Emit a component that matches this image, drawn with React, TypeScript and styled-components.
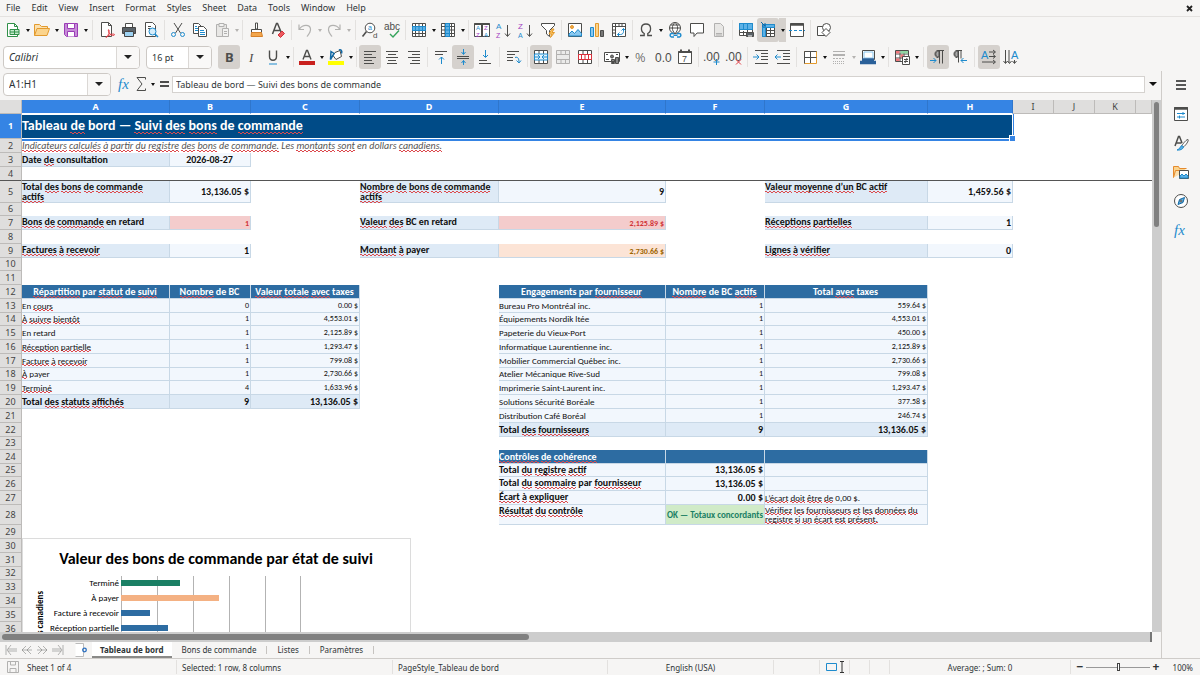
import React from 'react';
import styled, { createGlobalStyle, css } from 'styled-components';

const ui = `"Noto Sans", "Open Sans", sans-serif`;
const sheetFont = `Carlito, Lato, sans-serif`;

const Global = createGlobalStyle`
  * { box-sizing: border-box; }
  body { margin: 0; font-family: ${ui}; font-size: 9px; color: #2e3436; background: #f6f5f4; }
  button, input { font: inherit; color: inherit; margin: 0; padding: 0; }
`;

/* ---------- icons ---------- */

const D = '#4d4d4b';
const B = '#1e8bcd';
const P = '#a23cc0';
const Svg = styled.svg<{ $faded?: boolean }>`
  display: block;
  flex: none;
  width: 16px;
  height: 16px;
  overflow: visible;
  fill: none;
  stroke: ${D};
  stroke-width: 1;
  opacity: ${p => (p.$faded ? 0.4 : 1)};
`;

const lines = (rows: number[][]) => <path d={rows.map(([x, y, w]) => `M${x} ${y}h${w}`).join('')} />;
const letter = (x: number, y: number, size: number, fill: string, t: string, extra: object = {}) => (
  <text x={x} y={y} fontSize={size} fill={fill} stroke="none" fontFamily="Liberation Sans, sans-serif" {...extra}>{t}</text>
);

const icons: Record<string, React.ReactNode> = {
  new: <><path d="M2.5 1.5h7l3 3v10h-10z" fill="#fff" stroke="#309048" /><path d="M9.500 1.500v3h3" stroke="#309048" /><path d="M5 7.500h9v5H5zM5 10h9M9.500 7.500v5" stroke="#309048" fill="#c6ecce" /></>,
  open: <><path d="M.5 13.500v-11h5l2 2h6v2" fill="#fbe0ae" stroke="#e39a2d" /><path d="M.5 13.500l2.500-7h12.500l-2.500 7z" fill="#fbd48d" stroke="#e39a2d" /></>,
  save: <><path d="M1.500 1.500h13v13h-11l-2-2z" fill="#c78bd8" stroke="#9a3cb5" /><path d="M4.500 1.500h7v5h-7z" fill="#fff" stroke="#9a3cb5" /><path d="M4.500 14.500v-5h7v5" fill="#fff" stroke="#9a3cb5" /></>,
  pdf: <><path d="M2.500.5h7l3 3v11h-10z" fill="#fff" /><path d="M9.500.5v3h3" /><path d="M7 15.500c3-2 3.500-6 3-7.500-1-1.500-1 2 1 4s5 1.500 4.500.5S11 12 7 15.500z" stroke="#e23c44" /></>,
  print: <><path d="M4.500 5v-3.500h7V5" fill="#fff" /><path d="M1.500 5.500h13v6h-13z" fill="#5a6268" stroke="#444" /><path d="M3.500 9.500h9v5h-9z" fill="#9ed2f2" stroke="#444" /></>,
  preview: <><path d="M2.500.5h7l3 3v11h-10z" fill="#fff" /><path d="M5 4.500h3M5 6.500h2" /><circle cx="9.500" cy="9.500" r="3.500" fill="#d5ecfa" stroke={B} /><path d="M12 12l3 3" stroke={B} strokeWidth="1.500" /></>,
  cut: <><path d="M4 1l6.500 10M12 1L5.500 11" /><circle cx="3.500" cy="12.500" r="2" stroke={B} /><circle cx="12.500" cy="12.500" r="2" stroke={B} /></>,
  copy: <><path d="M1.500 1.500h5l3 3v7h-8z" fill="#fff" /><path d="M6.500 4.500h5l3 3v7h-8z" fill="#fff" /><path d="M8 8.500h4M8 10.500h5M8 12.500h5M3 4.500h2M3 6.500h3M3 8.500h3" stroke={B} /></>,
  paste: <><path d="M2.500 2.500h10v12h-10z" fill="#d5d3d0" /><path d="M5 1.500h5v3H5zM8.500 6.500h6v8h-6z" fill="#eee" /><path d="M10 9.500h3M10 11.500h3" /></>,
  brush: <><path d="M7.500 1h2v6h-2z" fill="#fff" /><path d="M3.500 7.500h10v3h-10z" fill="#fff" /><path d="M3.500 10.500h10l1 4h-11.500z" fill="#f3a64c" stroke="#d6812a" /></>,
  clear: <><path d="M2.500 12l4-10.500h1L11.500 11M4 8.500h6" strokeWidth="1.500" /><path d="M8 13l4-4 2.500 2.500-4 4z" fill="#ed5b60" stroke="#d22f3a" /></>,
  undo: <path d="M2 2.500v5h5M2.500 7C6 2 13 2.500 13.500 7c.3 3-1.500 5-3.500 7.500" strokeWidth="1.200" />,
  redo: <path d="M14 2.500v5H9M13.500 7C10 2 3 2.500 2.500 7c-.3 3 1.500 5 3.500 7.500" strokeWidth="1.200" />,
  find: <><circle cx="8" cy="6" r="4.800" fill="#fff" /><path d="M4.500 9.500l-4 5" strokeWidth="1.600" />{letter(6, 8, 7, B, 'a')}{letter(11, 16, 8, D, 'd')}</>,
  spell: <>{letter(0, 8, 10, D, 'abc')}<path d="M6 12l3 3 6-6.500" stroke="#35a35b" strokeWidth="1.400" /></>,
  row: <><path d="M1.500 1.500h13v13h-13zM1.500 5.500h13M1.500 8.500h13M1.500 11.500h13M4.500 1.500v13M8 1.500v13M11.500 1.500v13" fill="#fff" /><path d="M1.500 4.500h13v4h-13z" fill="#5db1e6" stroke={B} /><path d="M4.500 5v3M8 5v3M11.500 5v3" stroke={B} /></>,
  col: <><path d="M1.500 1.500h13v13h-13zM1.500 4.500h13M1.500 8h13M1.500 11.500h13M5 1.500v13M11.500 1.500v13" fill="#fff" /><path d="M5.500 1.500h4v13h-4z" fill="#5db1e6" stroke={B} /><path d="M6 4.500h3M6 8h3M6 11.500h3" stroke={B} /></>,
  sort: <><path d="M.5 1.500h15v13H.5z" fill="#fff" /><path d="M.5 2h15M8 1v13.500" strokeWidth="2" />{letter(2, 8, 6, B, 'A')}{letter(2, 15, 6, P, 'Z')}{letter(10, 8, 6, P, 'Z')}{letter(10, 15, 6, B, 'A')}</>,
  asc: <>{letter(0, 7, 8, B, 'A')}{letter(0, 16, 7, P, 'Z')}<path d="M11.500 3v11M9 11.500l2.500 3 2.500-3" /></>,
  desc: <>{letter(0, 7, 8, P, 'Z')}{letter(0, 16, 7, B, 'A')}<path d="M11.500 3v11M9 11.500l2.500 3 2.500-3" /></>,
  filter: <><path d="M1.500 1.500h13v2L9.500 8.500v6l-3-2.500V8.500L1.500 3.500z" fill="#fff" /><path d="M12 7l-3 5h2.500l-1 3.500 4-5H12l2-3.500z" fill="#f8c05e" stroke="#e39a2d" /></>,
  image: <><path d="M1.500 1.500h13v13h-13z" fill="#fff" /><circle cx="5" cy="5" r="1.500" fill="#f3a64c" stroke="#e39a2d" /><path d="M2 14v-2l3-3 2.500 2.500L11 7.500l3.500 4V14z" fill="#8ac8f0" stroke={B} /></>,
  chart: <><path d="M1.500 5.500h3v9h-3z" fill="#8ac8f0" stroke={B} /><path d="M6.500 1.500h3v13h-3z" fill="#fbd48d" stroke="#e39a2d" /><path d="M11.500 8.500h3v6h-3z" fill="#777" /></>,
  pivot: <><path d="M1.500 1.500h13v13h-13z" fill="#fff" /><path d="M1.500 4.500h13M4.500 1.500v13M8 1.500v3M11 1.500v3M1.500 8h3M1.500 11h3" /><path d="M6.500 12.500h3c2 0 3-1.500 3-3v-3M8.500 10.500l-2 2 2 2M10.500 8.500l2-2 2 2" stroke={B} /></>,
  omega: <path d="M2 13.500h4.200v-2C2.500 9.500 2 2 8 2s5.500 7.500 1.800 9.500v2H14" strokeWidth="1.300" />,
  link: <><circle cx="8" cy="6" r="5.500" fill="#fff" /><path d="M2.500 6h11M8 .5c-3.500 3-3.500 8 0 11M8 .5c3.500 3 3.500 8 0 11M3.500 3h9" /><path d="M7 11.500H4.500a1.800 1.800 0 000 3.500H7M10 11.500h2.500a1.800 1.800 0 010 3.500H10M6.500 13.300h4" stroke={B} strokeWidth="1.500" /></>,
  comment: <path d="M1.500 1.500h13v9.500H8l-3 3.500V11H1.500z" fill="#fff" />,
  header: <><path d="M3.500 1.500h6l3 3v10h-9z" fill="#d5d3d0" /><path d="M5 11.500h6M5 13h6" /></>,
  area: <><path d="M1.500 1.500h13v12h-13zM1.500 10.500h13M5.500 9v4M9.500 1v12" fill="#fff" /><path d="M1.500 1.500h13v6h-13z" fill="#5db1e6" stroke={B} /><path d="M5.500 2v5M9.500 2v5" stroke={B} /><path d="M8.500 10.500h7v4h-7z" fill="#5a6268" /><path d="M10 9h4M10 14h4" stroke="#fff" /></>,
  freeze: <><path d="M2.500 2.500h12v12h-12zM6.500 2.500v12M10.500 2.500v12M2.500 8.500h12M2.500 11.500h12" fill="#fff" /><path d="M2.500 2.500h12v3h-12zM2.500 2.500h3v12h-3z" fill="#5db1e6" stroke={B} /><path d="M1 0l4 4M5 1v3H2" stroke="#1369a5" /></>,
  split: <><path d="M1.500 1.500h13v13h-13z" fill="#fff" /><path d="M1.500 2.500h13" strokeWidth="2.500" /><path d="M0 8.500h16" stroke={B} strokeDasharray="3 2" /></>,
  shapes: <><path d="M1.500 4.500h8v9h-8z" fill="#fff" /><circle cx="10.500" cy="5.500" r="4" fill="#fff" /><path d="M10 6.500l4 4-4 4-4-4z" fill="#fff" /></>,
  bold: letter(4, 13, 13, D, 'B', { fontWeight: 700, fontFamily: ui }),
  italic: letter(6, 13, 13, D, 'I', { fontStyle: 'italic', fontFamily: 'Liberation Serif, serif' }),
  underline: <><path d="M4.500 1.500v6c0 5 7 5 7 0v-6" strokeWidth="1.400" /><path d="M4 15h8" stroke={B} /></>,
  fontcolor: <><path d="M4 10.500L7.500 1.500h1L12 10.500M5.200 7.500h5.600" strokeWidth="1.400" /><path d="M0 14h16" stroke="#c9211e" strokeWidth="4" /></>,
  fill: <><path d="M7 3.500l5-2 1.500 6-5.500 3-3-4z" fill="#fff" /><path d="M3 2.500l3 2-3.500 6zM11 1c2-1 3.500 1 2.500 3.500" stroke="#1369a5" strokeWidth="1.500" /><path d="M0 14h16" stroke="#ffff00" strokeWidth="4" /></>,
  left: lines([[2, 2.5, 12], [2, 5.500, 8], [2, 8.500, 12], [2, 11.500, 8], [2, 14.500, 10]]),
  center: lines([[2, 2.5, 12], [4, 5.500, 8], [2, 8.500, 12], [4, 11.500, 8], [3, 14.500, 10]]),
  right: lines([[2, 2.5, 12], [6, 5.500, 8], [2, 8.500, 12], [6, 11.500, 8], [4, 14.500, 10]]),
  top: <>{lines([[2, 2.5, 12], [2, 5.500, 8]])}<path d="M8.500 15V8M6 10.500L8.500 8l2.500 2.500" stroke={B} /></>,
  middle: <>{lines([[2, 7.5, 12], [2, 9.500, 12]])}<path d="M8.500 0v5M6.500 3l2 2.500 2-2.500M8.500 16v-4.500M6.500 14l2-2.500 2 2.500" stroke={B} /></>,
  bottom: <>{lines([[2, 11.5, 8], [2, 14.500, 12]])}<path d="M8.500 1v7M6 6l2.500 2.500L11 6" stroke={B} /></>,
  wrap: <>{lines([[1, 2.5, 12], [1, 5.500, 8], [1, 8.500, 6], [1, 11.500, 6]])}<path d="M9 8.500c3-1 4 1 4 5M10.500 11.500l2.500 2.500 2-2.500" stroke={B} /></>,
  merge: <><path d="M1.500 1.500h13v13h-13zM6 1.500v13M10.500 1.500v13" fill="#fff" /><path d="M1.500 5h13v6h-13z" fill="#e2f2fc" stroke={B} /><path d="M2 8h5M14 8H9M5 6l2 2-2 2M11 6L9 8l2 2" stroke={B} /></>,
  mergeoff: <><path d="M1.500 1.500h13v13h-13zM6 1.500v13M10.500 1.500v13" fill="#ddd" /><path d="M1.500 5.500h13v5h-13z" fill="#ddd" /></>,
  unmerge: <><path d="M1.500 1.500h13v13h-13zM6 1.500v13M10.500 1.500v13" fill="#fff" /><path d="M1.500 5.500h13v5h-13zM4.500 5.500v5M8 5.500v5M11.500 5.500v5" fill="#fff" stroke="#dc2f3a" /></>,
  currency: <><path d="M.5 3.500h15v9H.5z" fill="#fff" /><circle cx="8" cy="7.500" r="1.500" fill="#777" /><path d="M7.500 12.500v-2h3v2zM11.500 14.500v-6h3v6zM7.500 14.500v-1h3v1zM2 5.500h2M12 5.500h2M2 10.500h3" fill="#888" /></>,
  percent: letter(2, 13, 13, D, '%', { fontWeight: 300, fontFamily: ui }),
  number: letter(0, 13, 12, D, '0.0', { fontWeight: 300 }),
  date: <><path d="M1.500 2.500h13v12h-13z" fill="#fff" /><path d="M1.500 3h13M4 .5v2M12 .5v2" strokeWidth="2" />{letter(5, 13, 9, D, '7')}</>,
  adddec: <>{letter(-1, 12, 12, D, '.00', { fontWeight: 300 })}<path d="M12.500 10v6M9.500 13h6" stroke={B} /></>,
  rmdec: <>{letter(-1, 12, 12, D, '.00', { fontWeight: 300 })}<path d="M10 10.500l5 5M15 10.500l-5 5" stroke="#e23c44" /></>,
  indent: <>{lines([[2, 1.5, 13], [8, 4.500, 7], [8, 7.500, 7], [8, 10.500, 7], [2, 14.500, 13]])}<path d="M0 8h6M3.500 5.500L6 8l-2.500 2.500" stroke={B} /></>,
  outdent: <>{lines([[2, 1.5, 13], [8, 4.500, 7], [8, 7.500, 7], [8, 10.500, 7], [2, 14.500, 13]])}<path d="M0 8h6M2.500 5.500L0 8l2.500 2.500" stroke={B} /></>,
  borders: <><path d="M2.500 2.500h12v12h-12z" fill="#fff" stroke="#e39a2d" /><path d="M2.500 14.500v-12h12M8.500 2v12M2.500 8.500h12" /></>,
  linestyle: <><path d="M2 2.500h12" /><path d="M2 6h12" strokeWidth="2" /><path d="M2 9.500h12" strokeDasharray="2 1" /><path d="M2 12.500h12M2 14.500h12" strokeDasharray="1 1" /></>,
  linecolor: <><path d="M2.500 1.500h12v9h-12z" fill="#fff" /><path d="M4 3h9v6H4z" stroke="#8ac8f0" /><path d="M0 13.500h16M2 11h12" stroke="#2a6099" strokeWidth="3.500" /></>,
  cond: <><path d="M1.500 1.500h13v11h-13zM1.500 5h13M1.500 9h13M6 1.500v11M10 1.500v11" fill="#fff" /><path d="M2 2h3.500v2.500H2zM6.500 5.500H9.500v3H6.500zM2 9.500h3.500v2.500H2z" fill="#f0777c" stroke="none" /><path d="M6.500 2h7.500v2.500H6.500z" fill="#8fd6a2" stroke="none" /><path d="M8.500 7.500h7v8h-7z" fill="#fff" /><path d="M10 10.500h4M10 12.500h4M13 9l-2 5" /></>,
  ltr: <><path d="M8 8.500C4 8.500 4 1.500 8 1.500h6M9.500 1.500v13M12.500 1.500v13" /><path d="M8 8C5 8 5 2 8 2h1v6z" fill="#aaa" /><path d="M0 11.500h6M3.500 9L6 11.500 3.500 14" stroke={B} /></>,
  rtl: <><path d="M5 8.500C1 8.500 1 1.500 5 1.500h5M6.500 1.500v12M9 1.500v8" /><path d="M5 8C2 8 2 2 5 2h1v6z" fill="#aaa" /><path d="M15 11.500H9M11.500 9L9 11.500l2.500 2.500" stroke={B} /></>,
  horiz: <>{letter(0, 10, 11, B, 'A')}<path d="M8 3h6M8 7.500h6M1 13h13M12 1l2.500 2L12 5M12 5.500l2.500 2-2.500 2M12 11l2.500 2-2.500 2" /></>,
  vert: <>{letter(8, 10, 11, B, 'A')}<path d="M2.500 1v13M6 1v13M11.500 11v3M.5 12l2 2.500 2-2.500M4.500 12l2 2.500 2-2.500M9.500 12l2 2.500 2-2.500" /></>,
  fx: letter(1, 13, 15, B, 'fx', { fontStyle: 'italic', fontFamily: 'Liberation Serif, serif' }),
  sum: <path d="M12.500 3.500v-2H4L9 8l-5 6.500h8.500v-2" />,
  equals: <path d="M4 6h9M4 10h9" strokeWidth="2" />,
  menu: <path d="M3 4h10M3 8h10M3 12h10" stroke="#222" strokeWidth="1.500" />,
  props: <><path d="M1.500 1.500h13v13h-13z" fill="#fff" /><path d="M1 2.500h14" strokeWidth="2.500" /><path d="M4 7.500h8M4 11h8M10 6v3M6.500 9.500v3" stroke={B} /></>,
  stylesbar: <><path d="M2 11L5.500 1.500h1L9 8M3 8h5.500" strokeWidth="1.500" /><path d="M15 4.500c-1-.5-5 4-6 6l1.500 1.500c2-1.500 5.500-6 4.500-7.500z" fill="#fff" /><path d="M4 15c3-.5 3-4 5-4.500l1.500 1.500c-.5 2-3 3.500-6.500 3z" fill="#5db1e6" stroke={B} /></>,
  gallery: <><path d="M.5 13.500v-11h5l1 2h7" fill="#fbd48d" stroke="#e58a2d" /><path d="M.5 13.500l2-7h12" fill="#fbe0ae" stroke="#e58a2d" /><path d="M6.500 6.500h9v8h-9z" fill="#fff" /><path d="M7 14v-2l2-2 2 2 2-2 2 2v2z" fill="#5db1e6" stroke={B} /></>,
  navigator: <><circle cx="8" cy="8" r="6.500" fill="#fff" /><path d="M11.500 4.500l-1.500 5-5 2 1.500-5z" fill="#5db1e6" stroke="#1369a5" /><circle cx="8" cy="8" r="1" fill="#fff" /></>,
  first: <path d="M2 3v10M7 3L3 8l4 5M4 7h9M4 9h9" />,
  prev: <path d="M7 4L3 8l4 4M12 4L8 8l4 4M3 8h10" />,
  next: <path d="M4 4l4 4-4 4M9 4l4 4-4 4M3 8h10" />,
  last: <path d="M14 3v10M9 3l4 5-4 5M12 7H3M12 9H3" />,
  addsheet: <><path d="M1.500 1.500h8v13h-8" fill="#fff" stroke="#bbb" /><circle cx="10.500" cy="8" r="1.800" stroke="#2a6fc0" strokeWidth="1.300" /></>,
  disk: <><path d="M2.500 2.500h11v11h-11z" /><path d="M5.500 2.500h5v3.500h-5zM5 13.500v-4h6v4" /></>,
};

const Icon = ({ name, faded }: { name: string; faded?: boolean }) => (
  <Svg viewBox="0 0 16 16" $faded={faded} aria-hidden="true">{icons[name]}</Svg>
);

/* ---------- window frame ---------- */

const Window = styled.div`display: flex; flex-direction: column; height: 100vh; overflow: hidden;`;
const MenuBar = styled.nav`
  display: flex;
  align-items: center;
  height: 17px;
  padding: 0 6px;
  border-bottom: 1px solid #e4e2e0;
`;
const MenuItem = styled.button`
  border: 0;
  background: none;
  line-height: 14px;
  margin-right: 11px;
`;
const Close = styled.button`margin-left: auto; border: 0; background: none; display: flex;`;

const Bar = styled.div<{ $pad: number; $h: number }>`
  display: flex;
  align-items: center;
  height: ${p => p.$h}px;
  padding-left: ${p => p.$pad}px;
  flex: none;
`;
const Tool = styled.button<{ $on?: boolean; $slim?: boolean }>`
  display: flex;
  align-items: center;
  justify-content: center;
  flex: none;
  width: ${p => (p.$slim ? 16 : 22)}px;
  height: 24px;
  border: 0;
  border-radius: 3px;
  background: ${p => (p.$on ? '#d5d1cd' : 'none')};
`;
const Drop = styled.button<{ $on?: boolean; $faded?: boolean }>`
  flex: none;
  display: flex;
  align-items: center;
  justify-content: center;
  width: 7px;
  height: 24px;
  border: 0;
  background: ${p => (p.$on ? '#d5d1cd' : 'none')};
  &::after {
    content: '';
    border: 2px solid transparent;
    border-top: 3px solid ${p => (p.$faded ? '#b5b3b1' : '#111')};
    border-bottom: 0;
  }
`;
const Sep = styled.span<{ $wide?: boolean }>`
  flex: none;
  width: 1px;
  height: 20px;
  margin: 0 ${p => (p.$wide ? 3 : 2)}px;
  background: #e3e1df;
`;
const Combo = styled.div<{ $w: number }>`
  display: flex;
  flex: none;
  width: ${p => p.$w}px;
  height: 23px;
  border: 1px solid #cdc9c5;
  border-radius: 4px;
  background: #fff;
  overflow: hidden;
  margin-right: 6px;
`;
const ComboInput = styled.input<{ $italic?: boolean; $large?: boolean }>`
  flex: 1;
  min-width: 0;
  border: 0;
  padding-left: 5px;
  background: none;
  font-size: ${p => (p.$large ? 10 : 9)}px;
  font-style: ${p => (p.$italic ? 'italic' : 'normal')};
`;
const ComboButton = styled.button`
  width: 23px;
  border: 0;
  border-left: 1px solid #dbd8d5;
  background: #f9f8f7;
  display: flex;
  align-items: center;
  justify-content: center;
  &::after { content: ''; border: 4px solid transparent; border-top-color: #222; border-bottom: 0; }
`;

type Item = string; // "name", "name>" has a drop-down, "name*" is pressed, "name-" is disabled, "|" separates

const ToolItems = ({ items, slim }: { items: Item[]; slim?: boolean }) => (
  <>
    {items.map((it, i) => {
      if (it === '|' || it === '||') return <Sep key={i} $wide={it === '||'} />;
      const name = it.replace(/[>*-]/g, '');
      const on = it.includes('*');
      const faded = it.includes('-');
      return (
        <React.Fragment key={i}>
          <Tool type="button" $on={on} $slim={slim} aria-label={name} disabled={faded}><Icon name={name} faded={faded} /></Tool>
          {it.includes('>') && <Drop type="button" $on={on} $faded={faded} aria-label={`${name} options`} />}
        </React.Fragment>
      );
    })}
  </>
);

const standardBar = 'new> open> save> || pdf print preview | cut copy paste->- | brush clear | undo->- redo->- || find spell | row> col> | sort asc desc filter | image chart pivot | omega> link comment header- | area freeze*> split | shapes'.split(' ');
const formatBar = 'bold* italic underline> | fontcolor> fill> | left* center right | top middle* bottom || wrap | merge* mergeoff- unmerge | currency> percent number date | adddec rmdec | indent outdent | borders> linestyle-> linecolor> | cond> || ltr* rtl || horiz* vert'.split(' ');

const Body = styled.div`display: flex; flex: 1; min-height: 0;`;
const Main = styled.main`display: flex; flex-direction: column; flex: 1; min-width: 0;`;
const SideBar = styled.aside`
  display: flex;
  flex-direction: column;
  align-items: center;
  gap: 5px;
  width: 39px;
  flex: none;
  padding-top: 2px;
  border-left: 1px solid #cfccc9;
`;
const FormulaBar = styled(Bar)`padding-bottom: 3px;`;
const FormulaInput = styled.input`
  flex: 1;
  min-width: 0;
  height: 17px;
  border: 1px solid #d5d2cf;
  background: #fff;
  padding-left: 3px;
`;
const FormulaDrop = styled(Drop)`
  width: 16px;
  &::after { border-width: 4px 4px 0; }
`;

/* ---------- sheet ---------- */

const SheetArea = styled.div`display: flex; flex: 1; min-height: 0;`;
const SheetView = styled.div`position: relative; flex: 1; min-width: 0; overflow: hidden; background: #fff;`;
const VScroll = styled.div`
  width: 9px;
  flex: none;
  background: #cdcdcd;
  padding: 2px;
  &::after { content: ''; display: block; width: 5px; height: 125px; border-radius: 3px; background: #808080; }
`;
const HScroll = styled.div`
  flex: none;
  height: 10px;
  margin-right: 9px;
  background: #cdcdcd;
  padding: 2px;
  border-right: 2px solid #777;
  &::after { content: ''; display: block; width: 46%; height: 6px; border-radius: 3px; background: #808080; }
`;

const Grid = styled.table`
  table-layout: fixed;
  border-collapse: separate;
  border-spacing: 0;
  width: 1152px;
  font-family: ${sheetFont};
  color: #111;
`;
const ColHead = styled.th<{ $on?: boolean }>`
  height: 14px;
  padding: 0;
  font: ${p => (p.$on ? 700 : 400)} 9px/13px ${ui};
  color: ${p => (p.$on ? '#fff' : '#444')};
  background: ${p => (p.$on ? '#3584e4' : '#dfdedd')};
  border-right: 1px solid ${p => (p.$on ? '#2f76cc' : '#bdbbb9')};
  border-bottom: 1px solid ${p => (p.$on ? '#fff' : '#bdbbb9')};
`;
const RowHead = styled.th<{ $on?: boolean }>`
  padding: 0;
  font: ${p => (p.$on ? 700 : 400)} 9px/12px ${ui};
  color: ${p => (p.$on ? '#fff' : '#444')};
  background: ${p => (p.$on ? '#3584e4' : '#dfdedd')};
  border-right: 1px solid #bdbbb9;
  border-bottom: 1px solid #bdbbb9;
`;
const Row = styled.tr<{ $h: number; $frozen?: boolean }>`
  height: ${p => p.$h}px;
  ${p => p.$frozen && css`& > * { border-bottom: 1px solid #555; }`}
`;

type Kind = 'title' | 'note' | 'label' | 'date' | 'kpi' | 'late' | 'due' | 'head' | 'headLeft' | 'item' | 'num' | 'total' | 'totalNum' | 'check' | 'ok' | 'hint';

const box = css`border-right: 1px solid #c8d8e6; border-bottom: 1px solid #c8d8e6;`;
const strong = css`font-size: 10px; font-weight: 700;`;
const figure = css`font-size: 10px; font-weight: 700; text-align: right;`;
const raised = css`line-height: 11px; padding-bottom: 1px;`;
const kinds: Record<Kind, ReturnType<typeof css>> = {
  title: css`
    font-size: 14px; font-weight: 700; color: #fff; background: #004b87; line-height: 18px; padding-bottom: 2px;
    border: 1px solid #fff; border-left: 0; box-shadow: 1px 0 0 #3584e4, 0 2px 0 #3584e4;
    position: relative;
    &::after {
      content: ''; position: absolute; right: -3px; bottom: -3px; width: 5px; height: 5px;
      background: #3584e4; border: 1px solid #fff; box-sizing: content-box; margin: -1px;
    }
  `,
  note: css`${raised} font-size: 10px; font-style: italic; color: #555;`,
  label: css`${box} ${strong} background: #deeaf6; white-space: normal; vertical-align: top; line-height: 10px; padding: 1px 4px 0 0;`,
  date: css`${box} ${figure} ${raised} text-align: center; background: #f2f7fd;`,
  kpi: css`${box} ${figure} ${raised} background: #f2f7fd;`,
  late: css`${box} font-size: 8px; font-weight: 700; text-align: right; background: #f4cccc; color: #d13438;`,
  due: css`${box} font-size: 8px; font-weight: 700; text-align: right; background: #fce4d6; color: #9c6500;`,
  head: css`${box} ${strong} ${raised} text-align: center; background: #2d6ca2; color: #fff;`,
  headLeft: css`${box} ${strong} background: #2d6ca2; color: #fff;`,
  item: css`${box} ${raised} font-size: 9px; background: #f2f7fd;`,
  num: css`${box} ${raised} font-size: 8px; text-align: right; background: #f2f7fd;`,
  total: css`${box} ${strong} background: #deeaf6;`,
  totalNum: css`${box} ${figure} background: #deeaf6;`,
  check: css`${box} ${strong} background: #f2f7fd; vertical-align: top; line-height: 11px;`,
  ok: css`${box} font-size: 9px; font-weight: 700; text-align: right; background: #d0ebc8; color: #1a7f64;`,
  hint: css`${box} font-size: 9px; background: #f2f7fd; white-space: normal; line-height: 9px; padding-bottom: 1px;`,
};
const Cell = styled.td<{ $kind?: Kind }>`
  padding: 0 1px 0 0;
  line-height: 12px;
  white-space: nowrap;
  ${p => p.$kind && kinds[p.$kind]}
`;
/* A fine two-step squiggle just under the baseline. */
const Misspelt = styled.span`
  background:
    linear-gradient(90deg, #dc4a4e 50%, transparent 50%) 0 calc(100% - 1px) / 4px 1px repeat-x,
    linear-gradient(90deg, transparent 50%, #dc4a4e 50%) 0 100% / 4px 1px repeat-x;
`;

/* Words between tildes carry the spell checker's mark. */
const Spelled = ({ text }: { text: string }) => (
  <>{text.split('~').map((part, i) => (i % 2 ? <Misspelt key={i}>{part}</Misspelt> : part))}</>
);

const columns: [string, number][] = [
  ['A', 148], ['B', 81], ['C', 109], ['D', 139], ['E', 167], ['F', 99],
  ['G', 163], ['H', 85], ['I', 41], ['J', 41], ['K', 41], ['', 16],
];
const heights = [25, 14, 14, 14, 22, 13, 14, 14, 14, 13, 14, 14, 14, 13, 14, 14, 14, 13, 14, 14, 14, 14, 13, 14, 13, 14, 14, 19, 14, 14, 14, 13, 14, 14, 14, 14];

type CellData = [Kind, string];
const cells: Record<string, CellData> = {
  A1: ['title', 'Tableau ~de~ bord — ~Suivi~ ~des~ ~bons~ de ~commande~'],
  A2: ['note', '~Indicateurs~ ~calculés~ ~à~ ~partir~ ~du~ ~registre~ ~des~ ~bons~ de ~commande.~ Les ~montants~ ~sont~ en dollars ~canadiens.~'],
  A3: ['total', 'Date ~de~ consultation'],
  B3: ['date', '2026-08-27'],
  A5: ['label', 'Total ~des~ ~bons~ ~de~ ~commande~ ~actifs~'],
  B5: ['kpi', '13,136.05 $'],
  D5: ['label', '~Nombre~ ~de~ ~bons~ ~de~ ~commande~ ~actifs~'],
  E5: ['kpi', '9'],
  G5: ['label', '~Valeur~ ~moyenne~ ~d’un~ BC ~actif~'],
  H5: ['kpi', '1,459.56 $'],
  A7: ['label', '~Bons~ ~de~ ~commande~ en retard'],
  B7: ['late', '1'],
  D7: ['label', '~Valeur~ ~des~ BC en retard'],
  E7: ['late', '2,125.89 $'],
  G7: ['label', '~Réceptions~ ~partielles~'],
  H7: ['kpi', '1'],
  A9: ['label', '~Factures~ ~à~ ~recevoir~'],
  B9: ['kpi', '1'],
  D9: ['label', '~Montant~ ~à~ payer'],
  E9: ['due', '2,730.66 $'],
  G9: ['label', '~Lignes~ ~à~ ~vérifier~'],
  H9: ['kpi', '0'],
  A12: ['head', '~Répartition~ par ~statut~ de ~suivi~'],
  B12: ['head', '~Nombre~ de BC'],
  C12: ['head', '~Valeur~ ~totale~ ~avec~ taxes'],
  E12: ['head', 'Engagements par ~fournisseur~'],
  F12: ['head', '~Nombre~ de BC ~actifs~'],
  G12: ['head', 'Total ~avec~ taxes'],
  A20: ['total', 'Total ~des~ ~statuts~ ~affichés~'],
  B20: ['totalNum', '9'],
  C20: ['totalNum', '13,136.05 $'],
  E22: ['total', 'Total ~des~ ~fournisseurs~'],
  F22: ['totalNum', '9'],
  G22: ['totalNum', '13,136.05 $'],
  E24: ['headLeft', '~Contrôles~ ~de~ ~cohérence~'],
  F24: ['head', ''],
  G24: ['head', ''],
  E25: ['check', 'Total ~du~ ~registre~ ~actif~'],
  F25: ['kpi', '13,136.05 $'],
  G25: ['item', ''],
  E26: ['check', 'Total ~du~ ~sommaire~ par ~fournisseur~'],
  F26: ['kpi', '13,136.05 $'],
  G26: ['item', ''],
  E27: ['check', '~Écart~ ~à~ ~expliquer~'],
  F27: ['kpi', '0.00 $'],
  G27: ['hint', '~L’écart~ ~doit~ ~être~ ~de~ 0,00 $.'],
  E28: ['check', '~Résultat~ ~du~ ~contrôle~'],
  F28: ['ok', 'OK — Totaux concordants'],
  G28: ['hint', '~Vérifiez~ ~les~ ~fournisseurs~ ~et~ ~les~ ~données~ ~du~ ~registre~ ~si~ ~un~ ~écart~ ~est~ ~présent.~'],
};
([
  ['En ~cours~', '0', '0.00'], ['~À~ ~suivre~ ~bientôt~', '1', '4,553.01'], ['En retard', '1', '2,125.89'],
  ['~Réception~ ~partielle~', '1', '1,293.47'], ['~Facture~ ~à~ ~recevoir~', '1', '799.08'],
  ['~À~ payer', '1', '2,730.66'], ['~Terminé~', '4', '1,633.96'],
]).forEach(([label, count, value], i) => {
  cells[`A${13 + i}`] = ['item', label];
  cells[`B${13 + i}`] = ['num', count];
  cells[`C${13 + i}`] = ['num', `${value} $`];
});
([
  ['Bureau Pro Montréal inc.', '559.64'], ['Équipements Nordik ltée', '4,553.01'], ['Papeterie du Vieux-Port', '450.00'],
  ['Informatique Laurentienne inc.', '2,125.89'], ['Mobilier Commercial Québec inc.', '2,730.66'],
  ['Atelier Mécanique Rive-Sud', '799.08'], ['Imprimerie Saint-Laurent inc.', '1,293.47'],
  ['Solutions Sécurité Boréale', '377.58'], ['Distribution Café Boréal', '246.74'],
]).forEach(([label, value], i) => {
  cells[`E${13 + i}`] = ['item', label];
  cells[`F${13 + i}`] = ['num', '1'];
  cells[`G${13 + i}`] = ['num', `${value} $`];
});

const Sheet = () => (
  <Grid>
    <colgroup>
      <col style={{ width: 22 }} />
      {columns.map(([, w], i) => <col key={i} style={{ width: w }} />)}
    </colgroup>
    <thead>
      <tr>
        <ColHead aria-label="Select all" />
        {columns.map(([c], i) => <ColHead key={i} $on={i < 8}>{c}</ColHead>)}
      </tr>
    </thead>
    <tbody>
      {heights.map((h, r) => (
        <Row key={r} $h={h} $frozen={r === 3}>
          <RowHead $on={r === 0}>{r + 1}</RowHead>
          {columns.map(([c], i) => {
            if (r === 0 && i > 0 && i < 8) return null;
            const cell = cells[`${c}${r + 1}`];
            return (
              <Cell key={i} $kind={cell?.[0]} colSpan={r === 0 && i === 0 ? 8 : undefined}>
                {cell && <Spelled text={cell[1]} />}
              </Cell>
            );
          })}
        </Row>
      ))}
    </tbody>
  </Grid>
);

/* The chart floats over the cells, anchored to row 30. */
const ChartFrame = styled.svg`
  position: absolute;
  left: 22px;
  top: 438px;
  width: 389px;
  height: 220px;
  font-family: ${sheetFont};
`;
const bars: [string, number, string][] = [
  ['Terminé', 59, '#1a7f64'], ['À payer', 98, '#f4b183'], ['Facture à recevoir', 29, '#2d6ca2'], ['Réception partielle', 47, '#2d6ca2'],
];
const Chart = () => (
  <ChartFrame viewBox="0 0 389 220" role="img" aria-label="Valeur des bons de commande par état de suivi">
    <rect x="0.5" y="0.5" width="388" height="219" fill="#fff" stroke="#dcdcdc" />
    <text x="194" y="26" fontSize="16" fontWeight="700" textAnchor="middle">Valeur des bons de commande par état de suivi</text>
    {[99, 135, 171, 207, 243, 278].map(x => <path key={x} d={`M${x + 0.5} 38v180`} stroke="#b3b3b3" />)}
    {bars.map(([name, w, color], i) => (
      <g key={name}>
        <rect x="99" y={42 + i * 15} width={w} height="6" fill={color} />
        <text x="97" y={48 + i * 15} fontSize="9" textAnchor="end">{name}</text>
      </g>
    ))}
    <text x="21" y="53" fontSize="9" fontWeight="700" textAnchor="end" transform="rotate(-90 21 53)">Dollars canadiens</text>
  </ChartFrame>
);

/* ---------- bottom bars ---------- */

const Tabs = styled.div`display: flex; align-items: center; height: 16px; flex: none;`;
const TabNav = styled.div`
  display: flex;
  padding-left: 4px;
  width: 72px;
  flex: none;
`;
const NavButton = styled.button`border: 0; background: none; width: 15px; display: flex;`;
const AddSheet = styled.button`border: 0; background: none; width: 20px; display: flex; flex: none; padding-left: 2px;`;
const Tab = styled.button<{ $on?: boolean }>`
  height: 16px;
  border: 0;
  padding: 0 ${p => (p.$on ? 8 : 10)}px;
  font-size: 8px;
  line-height: 13px;
  font-weight: ${p => (p.$on ? 700 : 400)};
  background: ${p => (p.$on ? '#fff' : 'none')};
  border-bottom: 2px solid ${p => (p.$on ? '#8a8a88' : 'transparent')};
`;
const TabRule = styled.span`width: 1px; height: 8px; background: #c6c3c0;`;
const Status = styled.footer`
  display: flex;
  align-items: center;
  height: 17px;
  flex: none;
  border-top: 1px solid #cfccc9;
  font-size: 8px;
`;
const StatusField = styled.span<{ $w: number; $center?: boolean }>`
  width: ${p => (p.$w / 1200) * 100}%;
  height: 14px;
  display: flex;
  align-items: center;
  justify-content: ${p => (p.$center ? 'center' : 'flex-start')};
  gap: 6px;
  padding-left: ${p => (p.$center ? 0 : 5)}px;
  white-space: nowrap;
  border-right: 1px solid #e3e1df;
`;
const Zoom = styled.div`display: flex; align-items: center; gap: 2px; padding: 0 7px 0 5px; flex: 1; white-space: nowrap;`;
const ZoomLevel = styled.span`margin-left: auto;`;
const ZoomButton = styled.button`border: 0; background: none; font-weight: 700; font-size: 12px; line-height: 12px; width: 8px;`;
const ZoomSlider = styled.input`
  appearance: none;
  width: 64px;
  height: 10px;
  background: linear-gradient(#999, #999) center / 100% 1px no-repeat;
  &::-webkit-slider-thumb { appearance: none; width: 3px; height: 8px; border: 1px solid #444; background: #fff; }
`;
const Mode = styled.svg`width: 20px; height: 12px; fill: none;`;

export default function App() {
  return (
    <Window>
      <Global />
      <MenuBar>
        {['File', 'Edit', 'View', 'Insert', 'Format', 'Styles', 'Sheet', 'Data', 'Tools', 'Window', 'Help'].map(m => (
          <MenuItem key={m} type="button">{m}</MenuItem>
        ))}
        <Close type="button" aria-label="Close">
          <svg width="9" height="9" viewBox="0 0 9 9"><path d="M2 2l5 5M7 2l-5 5" stroke="#222" strokeWidth="1.800" /></svg>
        </Close>
      </MenuBar>
      <Bar $pad={2} $h={26}><ToolItems items={standardBar} /></Bar>
      <Bar $pad={3} $h={28}>
        <Combo $w={137}>
          <ComboInput $italic $large defaultValue="Calibri" aria-label="Font name" />
          <ComboButton type="button" aria-label="Font list" />
        </Combo>
        <Combo $w={66}>
          <ComboInput defaultValue="16 pt" aria-label="Font size" />
          <ComboButton type="button" aria-label="Size list" />
        </Combo>
        <ToolItems items={formatBar} />
      </Bar>
      <Body>
        <Main>
          <FormulaBar $pad={3} $h={29}>
            <Combo $w={108}>
              <ComboInput $large defaultValue="A1:H1" aria-label="Name box" />
              <ComboButton type="button" aria-label="Named ranges" />
            </Combo>
            <ToolItems slim items={['fx', 'sum>', 'equals']} />
            <FormulaInput defaultValue="Tableau de bord — Suivi des bons de commande" aria-label="Formula" />
            <FormulaDrop type="button" aria-label="Expand formula bar" />
          </FormulaBar>
          <SheetArea>
            <SheetView>
              <Sheet />
              <Chart />
            </SheetView>
            <VScroll />
          </SheetArea>
          <HScroll />
          <Tabs>
            <TabNav>
              {['first', 'prev', 'next', 'last'].map(n => (
                <NavButton key={n} type="button" aria-label={n} disabled><Icon name={n} faded /></NavButton>
              ))}
            </TabNav>
            <AddSheet type="button" aria-label="Add sheet"><Icon name="addsheet" /></AddSheet>
            <Tab type="button" $on>Tableau de bord</Tab>
            {['Bons de commande', 'Listes', 'Paramètres'].map(t => (
              <React.Fragment key={t}><Tab type="button">{t}</Tab><TabRule /></React.Fragment>
            ))}
          </Tabs>
        </Main>
        <SideBar>
          {['menu', 'props', 'stylesbar', 'gallery', 'navigator', 'fx'].map(n => (
            <Tool key={n} type="button" aria-label={n}><Icon name={n} /></Tool>
          ))}
        </SideBar>
      </Body>
      <Status>
        <StatusField $w={177}><Icon name="disk" faded />Sheet 1 of 4</StatusField>
        <StatusField $w={216}>Selected: 1 row, 8 columns</StatusField>
        <StatusField $w={215}>PageStyle_Tableau de bord</StatusField>
        <StatusField $w={166} $center>English (USA)</StatusField>
        <StatusField $w={46} />
        <StatusField $w={30}>
          <Mode viewBox="0 0 20 12"><path d="M1.500 2.500h10v7h-10z" stroke={B} /><path d="M15 .5h4M17 .5v11M15 11.500h4" stroke="#333" /></Mode>
        </StatusField>
        <StatusField $w={20} />
        <StatusField $w={20} />
        <StatusField $w={181} $center>Average: ; Sum: 0</StatusField>
        <Zoom>
          <ZoomButton type="button" aria-label="Zoom out">−</ZoomButton>
          <ZoomSlider type="range" aria-label="Zoom" defaultValue={50} />
          <ZoomButton type="button" aria-label="Zoom in">+</ZoomButton>
          <ZoomLevel>100%</ZoomLevel>
        </Zoom>
      </Status>
    </Window>
  );
}
